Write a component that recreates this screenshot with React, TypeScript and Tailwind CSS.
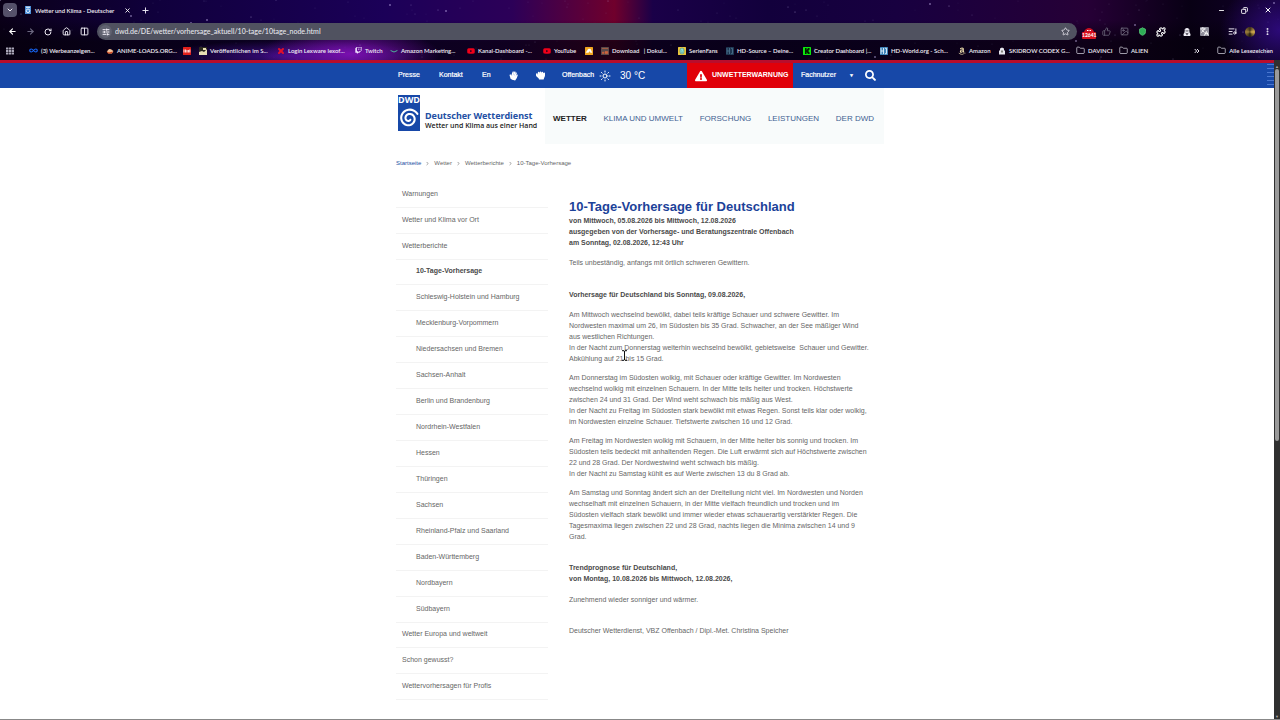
import React from "react";
import {
  FaHandPaper, FaHandRock, FaSearch, FaExclamationTriangle, FaAmazon, FaYoutube, FaTwitch, FaUserSecret, FaTh,
} from "react-icons/fa";
import {
  ArrowLeft, ArrowRight, RotateCw, House, Columns2, SlidersHorizontal, ChevronDown, ChevronRight,
  X, Plus, Star, Minus, Copy, Infinity as InfinityIcon, Folder, Puzzle, Sun, Shield,
  ListMusic, Languages, EllipsisVertical, Image as ImageIcon, ThumbsUp, ChevronsRight,
} from "lucide-react";

const stars = Array.from({ length: 260 }, (_, i) => ({
  x: (i * 397 + ((i * i * 31) % 211)) % 1280,
  y: (i * 17 + ((i * i * 7) % 23)) % 60,
  r: i % 17 === 0 ? 0.8 : i % 5 === 0 ? 0.55 : 0.35,
  o: i % 17 === 0 ? 0.8 : 0.25 + (i % 4) * 0.1,
}));

function Square({ bg, fg = "#fff", label }: { bg: string; fg?: string; label?: string }) {
  return (
    <svg viewBox="0 0 8 8" className="size-2 shrink-0" aria-hidden="true">
      <rect width="8" height="8" rx="0.5" fill={bg} />
      {label === "K" && <path d="M2 1h1.6v2L5 1h1.6v1.4L5.2 4l1.4 1.6V7H5L3.6 5v2H2z" fill={fg} />}
      {label === "bars" && <path d="M1 2.5v3M2.6 2.5v3M4 3v2.5M5.4 3v2.5M6.8 2.5v3" stroke={fg} strokeWidth="0.9" />}
      {label === "ea" && <path d="M1 5.5 3.4 2h2L7 5.5H5.5L4.6 3.8 3.5 5.5zM2 3.8h2.5" fill={fg} stroke={fg} strokeWidth="0.4" />}
      {label === "film" && <path d="M1 1.5h6M1.5 5h1.2v1.6H1.5zM4 4.6h2.8v2H4z" fill={fg} stroke={fg} strokeWidth="0.6" />}
      {label === "face" && <path d="M2 3a2 2 0 0 1 4 0v2a2 2 0 0 1-4 0zM3 3.4h.5M5 3.4h.4M3 5.2h2" fill={fg} stroke="#367b80" strokeWidth="0.5" />}
      {label === "hd" && <path d="M1 1v6M3.5 1v6M1 4h2.5M5 1.3h1.5v5.4H5" fill="none" stroke={fg} strokeWidth="0.9" />}
      {label === "pic" && <path d="M0 8V5l3-1 2 1 3-3v6zM4 1h3v2H4z" fill={fg} />}
    </svg>
  );
}

const YouTubeIcon = () => <FaYoutube className="size-2 shrink-0 text-[#f00019]" />;
const AmazonIcon = () => (
  <svg viewBox="0 0 8 8" className="size-2 shrink-0"><path d="M.6 3.5Q4 6.5 7.4 3.5" fill="none" stroke="#4fb59a" strokeWidth="1" /></svg>
);
const FolderIcon = () => <Folder className="size-[9px] shrink-0 text-[#d0cfdb]" strokeWidth={2} />;

const bookmarks: { label: string; w: string; icon: React.ReactNode }[] = [
  { label: "(3) Werbeanzeigen...", w: "w-[77px]", icon: <InfinityIcon className="size-[9px] shrink-0 text-[#1769ff]" strokeWidth={3} /> },
  {
    label: "ANIME-LOADS.ORG...", w: "w-[77px]",
    icon: <svg viewBox="0 0 8 8" className="size-2 shrink-0"><path d="M1 4.2 3 2l2 .2L7.4 4 6 6.6H2.4z" fill="#f3c29a" /><path d="M.5 4.6 3 5.4l4-.8-1.4 2H2z" fill="#d8471c" /></svg>,
  },
  { label: "", w: "w-[16px]", icon: <Square bg="#e3201b" label="bars" /> },
  { label: "Veröffentlichen im S...", w: "w-[78px]", icon: <Square bg="#2c2a20" fg="#e8dfb4" label="pic" /> },
  { label: "Login Lexware lexof...", w: "w-[78px]", icon: <X className="size-2 shrink-0 text-[#e3102a]" strokeWidth={6} /> },
  { label: "Twitch", w: "w-[35px]", icon: <FaTwitch className="size-[7px] shrink-0 text-[#f1e6ff]" /> },
  { label: "Amazon Marketing...", w: "w-[77px]", icon: <AmazonIcon /> },
  { label: "Kanal-Dashboard -...", w: "w-[76px]", icon: <YouTubeIcon /> },
  { label: "YouTube", w: "w-[42px]", icon: <YouTubeIcon /> },
  { label: "", w: "w-[16px]", icon: <Square bg="#f0a51e" label="ea" /> },
  { label: "Download   | Dokul...", w: "w-[77px]", icon: <Square bg="#5a4a4a" fg="#d4643c" label="film" /> },
  { label: "SerienFans", w: "w-[48px]", icon: <Square bg="#e9c63c" fg="#8fe0d0" label="face" /> },
  { label: "HD-Source – Deine...", w: "w-[77px]", icon: <Square bg="#1d3550" fg="#48708c" label="hd" /> },
  { label: "Creator Dashboard |...", w: "w-[77px]", icon: <Square bg="#0be80b" fg="#032003" label="K" /> },
  { label: "HD-World.org - Sch...", w: "w-[78px]", icon: <Square bg="#3d82b8" fg="#e2f0fa" label="hd" /> },
  { label: "Amazon", w: "w-[40px]", icon: <FaAmazon className="size-2 shrink-0 text-[#f3e2b0]" /> },
  {
    label: "SKIDROW CODEX G...", w: "w-[78px]",
    icon: <svg viewBox="0 0 8 8" className="size-2 shrink-0"><path d="M2 3V1.6L4 .4l2 1.2V3l1 1v3.4H1V4z" fill="#e6e6ee" /><path d="M3.4 3.6h1.2v1.8H3.4z" fill="#443" /></svg>,
  },
  { label: "DAVINCI", w: "w-[43px]", icon: <FolderIcon /> },
  { label: "ALIEN", w: "w-[40px]", icon: <FolderIcon /> },
];

function Browser() {
  const btn = "flex size-3 shrink-0 items-center justify-center";
  return (
    <header className="relative h-[60px] overflow-hidden bg-[linear-gradient(90deg,#0a0018_0%,#10003c_12%,#1b0058_30%,#2c0058_40%,#70002c_48%,#1a0048_51%,#12003c_60%,#180040_70%,#260036_85%,#080014_93%,#12002c_100%)] font-[Lato,'Open_Sans',sans-serif] text-[6px] font-semibold text-[#f0edf6]">
      <div className="absolute inset-0 bg-[radial-gradient(ellipse_90px_26px_at_350px_54px,#7a10b0,transparent),radial-gradient(ellipse_130px_16px_at_290px_56px,#3a0c80,transparent),radial-gradient(ellipse_60px_50px_at_1280px_30px,#2c0a78,transparent),linear-gradient(180deg,transparent_20px,#05000cbb_42px)]" />
      <svg className="absolute inset-0 size-full" viewBox="0 0 1280 60" preserveAspectRatio="none" aria-hidden="true">
        {stars.map((s, i) => <circle key={i} cx={s.x} cy={s.y} r={s.r} fill="#d8c8ff" opacity={s.o} />)}
      </svg>
      <div className="relative flex h-5 items-center pr-2 pl-[3px]">
        <button aria-label="Tabs durchsuchen" className="flex size-[14px] items-center justify-center rounded-[4px] bg-[#55516a]">
          <ChevronDown className="size-2" strokeWidth={3} />
        </button>
        <div className="ml-2 flex w-[106px] items-center">
          <svg viewBox="0 0 6 8" className="h-2 w-[6px] shrink-0" aria-hidden="true"><rect width="6" height="8" fill="#4c8fd8" /><circle cx="3" cy="4.8" r="1.8" fill="none" stroke="#fff" strokeWidth=".8" /><path d="M1 1.2h4" stroke="#fff" /></svg>
          <span className="ml-1 whitespace-nowrap">Wetter und Klima - Deutscher</span>
          <button aria-label="Tab schließen" className="ml-auto"><X className="size-[7px] text-white" strokeWidth={3} /></button>
        </div>
        <button aria-label="Neuer Tab" className="ml-[10px]"><Plus className="size-[9px]" strokeWidth={2.5} /></button>
        <div className="ml-auto flex items-center gap-4 text-white">
          <button aria-label="Minimieren"><Minus className="size-[7px]" strokeWidth={3} /></button>
          <button aria-label="Verkleinern"><Copy className="size-[7px] -scale-x-100" strokeWidth={3} /></button>
          <button aria-label="Schließen"><X className="size-2" strokeWidth={3} /></button>
        </div>
      </div>
      <div className="relative flex h-[23px] items-center pr-2 pl-[6px]">
        <div className="flex w-[91px] items-center gap-[6px]">
          <button aria-label="Zurück" className={btn}><ArrowLeft className="size-[9px] text-white" strokeWidth={3} /></button>
          <button aria-label="Vorwärts" className={btn}><ArrowRight className="size-[9px] text-[#6c6880]" strokeWidth={3} /></button>
          <button aria-label="Neu laden" className={btn}><RotateCw className="size-2" strokeWidth={3} /></button>
          <button aria-label="Startseite" className={btn}><House className="size-[9px]" strokeWidth={2.5} /></button>
          <button aria-label="Geteilte Ansicht" className={btn}><Columns2 className="size-[9px]" strokeWidth={2.5} /></button>
        </div>
        <div className="flex h-[17px] flex-1 items-center rounded-full bg-[#505260] pr-[7px] pl-[2px]">
          <span className="flex size-[13px] items-center justify-center rounded-full bg-[#606270]"><SlidersHorizontal className="size-2" strokeWidth={3} /></span>
          <input aria-label="Adresse" defaultValue="dwd.de/DE/wetter/vorhersage_aktuell/10-tage/10tage_node.html" className="ml-[3px] min-w-0 flex-1 bg-transparent text-[7px] font-medium text-[#e6e6ec] outline-none" />
          <button aria-label="Lesezeichen setzen"><Star className="size-[9px]" strokeWidth={2} /></button>
        </div>
        <div className="ml-[5px] flex w-[190px] items-center">
          <button aria-label="Blocker" className="flex w-[14px] flex-col items-center pt-1">
            <svg viewBox="0 0 10 4" className="h-1 w-[10px]" aria-hidden="true"><path d="M0 4C1 1 3 0 5 0s4 1 5 4z" fill="#c80f22" /><path d="M3 2.500h1.500M5.500 2.500H7" stroke="#fff" strokeWidth="1" /></svg>
            <span className="w-full rounded-[1px] bg-[#d80f1e] text-center text-[5px] leading-[7px] font-bold text-white">12641</span>
          </button>
          <button aria-label="Teilen" className="ml-[6px]"><ThumbsUp className="size-[9px] text-[#6e6a7c]" strokeWidth={2} /></button>
          <button aria-label="Bild" className="ml-[9px]"><ImageIcon className="size-[9px] text-[#7f7b8c]" strokeWidth={2} /></button>
          <button aria-label="Schutz" className="ml-[9px]"><Shield className="size-[9px] fill-[#2fae57] text-[#5cd07e]" strokeWidth={2} /></button>
          <button aria-label="Erweiterungen" className="ml-[9px]"><Puzzle className="size-[10px] text-white" strokeWidth={2.5} /></button>
          <button aria-label="Inkognito" className="ml-[17px]"><FaUserSecret className="size-2" /></button>
          <button aria-label="Übersetzen" className="ml-[9px] rounded-[1px] bg-[#8f8d9a]"><Languages className="size-[9px] text-white" strokeWidth={2.5} /></button>
          <button aria-label="Medien" className="ml-auto"><ListMusic className="size-[9px]" strokeWidth={2.5} /></button>
          <button aria-label="Profil" className="ml-[8px] size-[10px] rounded-full bg-[conic-gradient(#3a2c18,#d8b050,#20180c,#a0823c,#3a2c18)]" />
          <button aria-label="Menü" className="ml-[8px]"><EllipsisVertical className="size-[9px]" strokeWidth={3} /></button>
        </div>
      </div>
      <nav aria-label="Lesezeichen" className="relative flex h-[15px] items-center pl-[6px]">
        <button aria-label="Apps" className="w-[23px]"><FaTh className="size-2 text-[#aaa7b8]" /></button>
        {bookmarks.map((b, i) => (
          <a key={i} href="#" aria-label={b.label || "Lesezeichen"} className={`flex shrink-0 items-center gap-[3px] whitespace-pre ${b.w}`}>
            {b.icon}{b.label && <span>{b.label}</span>}
          </a>
        ))}
        <button aria-label="Weitere Lesezeichen" className="ml-auto"><ChevronsRight className="size-2" strokeWidth={3} /></button>
        <a href="#" className="mr-[7px] ml-[16px] flex items-center gap-[3px] whitespace-nowrap"><FolderIcon />Alle Lesezeichen</a>
      </nav>
    </header>
  );
}

function TopBar() {
  return (
    <div className="flex h-[28px] border-t-[3px] border-[#b80d2c] bg-[#1748a8] text-white">
      <div className="min-w-0 flex-1 pl-[13px]">
        <div className="mx-auto flex h-full max-w-[488px] items-center text-[7px] font-bold">
          <a href="#" className="ml-[2px] w-[41px] font-normal [-webkit-text-stroke:0.2px_white]">Presse</a>
          <a href="#" className="w-[43px] font-normal [-webkit-text-stroke:0.2px_white]">Kontakt</a>
          <a href="#" className="w-[27px] font-normal [-webkit-text-stroke:0.2px_white]">En</a>
          <a href="#" aria-label="Gebärdensprache" className="w-[27px]"><FaHandPaper className="size-[9px] rotate-[20deg]" /></a>
          <a href="#" aria-label="Leichte Sprache" className="w-[26px]"><FaHandRock className="size-[9px]" /></a>
          <a href="#" className="flex items-center font-normal">
            <span className="w-[37px] [-webkit-text-stroke:0.2px_white]">Offenbach</span>
            <Sun className="size-3" strokeWidth={2} />
            <span className="ml-[9px] text-[10px]">30 °C</span>
          </a>
          <a href="#" className="ml-auto flex h-full w-[106px] items-center gap-[5px] bg-[#e00009] pl-2">
            <FaExclamationTriangle className="size-3" />UNWETTERWARNUNG
          </a>
          <button className="ml-2 flex w-[64px] items-center font-normal [-webkit-text-stroke:0.2px_white]">
            Fachnutzer<span className="ml-auto pr-[11px] text-[5px]">▼</span>
          </button>
          <button aria-label="Suche" className="mr-2"><FaSearch className="size-[11px]" /></button>
        </div>
      </div>
      <div className="my-px w-[7px] bg-[repeating-linear-gradient(180deg,#4a77cf_0_1px,transparent_1px_4px)]" />
    </div>
  );
}

const spiral = Array.from({ length: 60 }, (_, i) => {
  const a = -0.5 - (i / 59) * Math.PI * 3.6;
  const r = 9.6 - (i / 59) * 7.8;
  return `${(11 + r * Math.cos(a)).toFixed(2)} ${(13.5 + r * Math.sin(a)).toFixed(2)}`;
}).join("L");

function Logo() {
  return (
    <a href="#" className="flex items-end gap-[5px] self-start pt-[7px] pl-[2px] font-['Open_Sans','Noto_Sans',sans-serif]">
      <span className="flex h-[36px] w-[22px] flex-col items-center bg-[#1748a8]">
        <span className="text-[9px] leading-[10px] font-bold text-white">DWD</span>
        <svg viewBox="0 0 22 26" className="h-[26px] w-[22px]" aria-hidden="true">
          <path d={`M${spiral}`} fill="none" stroke="#fff" strokeWidth="2.1" strokeLinecap="round" />
        </svg>
      </span>
      <span className="flex flex-col pb-px whitespace-nowrap">
        <strong className="font-['Noto_Sans',sans-serif] text-[9px] leading-[11px] text-[#2450a4]">Deutscher Wetterdienst</strong>
        <strong className="text-[7px] leading-[9px] font-semibold text-[#222]">Wetter und Klima aus einer Hand</strong>
      </span>
    </a>
  );
}

const topics = ["Warnungen", "Wetter und Klima vor Ort", "Wetterberichte"];
const regions = [
  "10-Tage-Vorhersage", "Schleswig-Holstein und Hamburg", "Mecklenburg-Vorpommern", "Niedersachsen und Bremen",
  "Sachsen-Anhalt", "Berlin und Brandenburg", "Nordrhein-Westfalen", "Hessen", "Thüringen", "Sachsen",
  "Rheinland-Pfalz und Saarland", "Baden-Württemberg", "Nordbayern", "Südbayern",
];
const more = ["Wetter Europa und weltweit", "Schon gewusst?", "Wettervorhersagen für Profis"];

function Rows({ items, sub }: { items: string[]; sub?: boolean }) {
  return (
    <ul className={sub ? "-my-px" : ""}>
      {items.map((t) => (
        <li key={t} className="border-b border-[#f3f3f3]">
          <a href="#" className={`flex h-[25px] items-center ${sub ? "pl-5" : "pl-[6px]"} ${t === "10-Tage-Vorhersage" ? "font-bold text-[#4a4a4a]" : ""}`}>{t}</a>
        </li>
      ))}
    </ul>
  );
}

const paragraphs: string[][] = [
  ["Am Mittwoch wechselnd bewölkt, dabei teils kräftige Schauer und schwere Gewitter. Im", "Nordwesten maximal um 26, im Südosten bis 35 Grad. Schwacher, an der See mäßiger Wind", "aus westlichen Richtungen.", "In der Nacht zum Donnerstag weiterhin wechselnd bewölkt, gebietsweise  Schauer und Gewitter.", "Abkühlung auf 21 bis 15 Grad."],
  ["Am Donnerstag im Südosten wolkig, mit Schauer oder kräftige Gewitter. Im Nordwesten", "wechselnd wolkig mit einzelnen Schauern. In der Mitte teils heiter und trocken. Höchstwerte", "zwischen 24 und 31 Grad. Der Wind weht schwach bis mäßig aus West.", "In der Nacht zu Freitag im Südosten stark bewölkt mit etwas Regen. Sonst teils klar oder wolkig,", "im Nordwesten einzelne Schauer. Tiefstwerte zwischen 16 und 12 Grad."],
  ["Am Freitag im Nordwesten wolkig mit Schauern, in der Mitte heiter bis sonnig und trocken. Im", "Südosten teils bedeckt mit anhaltenden Regen. Die Luft erwärmt sich auf Höchstwerte zwischen", "22 und 28 Grad. Der Nordwestwind weht schwach bis mäßig.", "In der Nacht zu Samstag kühlt es auf Werte zwischen 13 du 8 Grad ab."],
  ["Am Samstag und Sonntag ändert sich an der Dreiteilung nicht viel. Im Nordwesten und Norden", "wechselhaft mit einzelnen Schauern, in der Mitte vielfach freundlich und trocken und im", "Südosten vielfach stark bewölkt und immer wieder etwas schauerartig verstärkter Regen. Die", "Tagesmaxima liegen zwischen 22 und 28 Grad, nachts liegen die Minima zwischen 14 und 9", "Grad."],
];

function Article() {
  return (
    <article className="min-w-0 flex-1 pt-4 text-[7px] leading-[11px] whitespace-pre text-[#666]">
      <h1 className="text-[13px] leading-[17px] font-bold text-[#1c4299]">10-Tage-Vorhersage für Deutschland</h1>
      <p className="pb-[9px] font-bold text-[#4a4a4a]">{"von Mittwoch, 05.08.2026 bis Mittwoch, 12.08.2026\nausgegeben von der Vorhersage- und Beratungszentrale Offenbach\nam Sonntag, 02.08.2026, 12:43 Uhr"}</p>
      <p>Teils unbeständig, anfangs mit örtlich schweren Gewittern.</p>
      <h2 className="pt-[21px] pb-[9px] font-bold text-[#4a4a4a]">Vorhersage für Deutschland bis Sonntag, 09.08.2026,</h2>
      <div className="relative flex flex-col gap-2">
        {paragraphs.map((p) => <p key={p[0]}>{p.join("\n")}</p>)}
        <svg viewBox="0 0 7 11" className="absolute top-[41px] left-[52px] h-[11px] w-[7px]" aria-hidden="true">
          <path d="M1 .7h2l.5.5.5-.5h2M3.500 1v9M1 10.300h2l.5-.5.5.5h2" fill="none" stroke="#111" strokeWidth="1" />
        </svg>
      </div>
      <h2 className="pt-5 pb-[10px] font-bold text-[#4a4a4a]">{"Trendprognose für Deutschland,\nvon Montag, 10.08.2026 bis Mittwoch, 12.08.2026,"}</h2>
      <p>Zunehmend wieder sonniger und wärmer.</p>
      <p className="pt-5">Deutscher Wetterdienst, VBZ Offenbach / Dipl.-Met. Christina Speicher</p>
    </article>
  );
}

export default function App() {
  return (
    <div className="flex min-h-screen flex-col bg-white font-['Liberation_Sans',Arial,sans-serif]">
      <Browser />
      <div className="flex flex-1 border-b border-[#888]">
        <div className="min-w-0 flex-1">
          <TopBar />
          <div className="pl-[6px]">
            <div className="mx-auto max-w-[488px] text-[7px] text-[#666]">
              <div className="flex h-[56px] justify-between">
                <Logo />
                <nav aria-label="Hauptmenü" className="flex w-[339px] items-center justify-between bg-[#f8fbfb] pt-[5px] pr-[10px] pl-2 text-[8px] text-[#3f5f92]">
                  <a href="#" className="font-bold text-[#222]">WETTER</a>
                  <a href="#">KLIMA UND UMWELT</a>
                  <a href="#">FORSCHUNG</a>
                  <a href="#">LEISTUNGEN</a>
                  <a href="#">DER DWD</a>
                </nav>
              </div>
              <nav aria-label="Brotkrumen" className="flex h-[38px] items-center gap-1 text-[6px]">
                <a href="#" className="text-[#2450a4]">Startseite</a><ChevronRight className="size-[5px]" strokeWidth={3} />
                <a href="#">Wetter</a><ChevronRight className="size-[5px]" strokeWidth={3} />
                <a href="#">Wetterberichte</a><ChevronRight className="size-[5px]" strokeWidth={3} />
                <span>10-Tage-Vorhersage</span>
              </nav>
              <main className="flex gap-[21px]">
                <nav aria-label="Wetter" className="w-[152px] shrink-0">
                  <Rows items={topics} />
                  <Rows items={regions} sub />
                  <Rows items={more} />
                </nav>
                <Article />
              </main>
            </div>
          </div>
        </div>
        <div className="flex w-[6px] flex-col items-center bg-[#303030] pt-1">
          <span className="text-[4px] leading-[5px] text-[#aaa]">▲</span>
          <span className="h-[372px] w-1 rounded-full bg-[#9a9a9a]" />
          <span className="mt-auto text-[4px] leading-[5px] text-[#aaa]">▼</span>
        </div>
      </div>
    </div>
  );
}
